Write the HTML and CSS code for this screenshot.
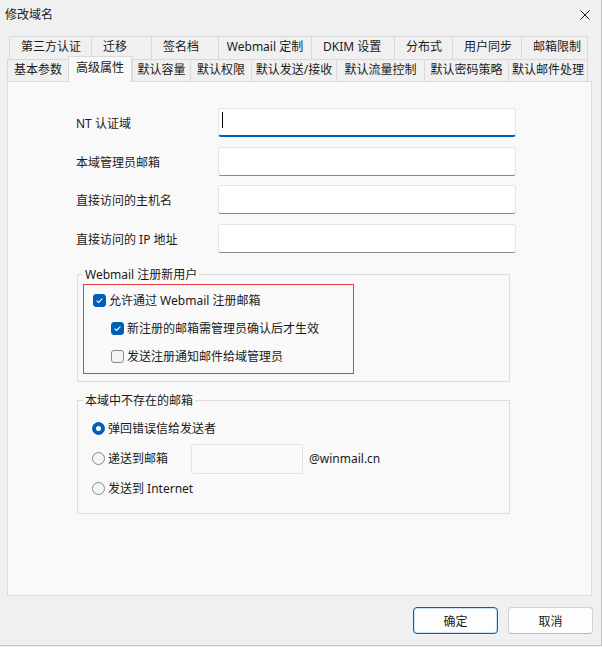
FILE: index.html
```html
<!doctype html>
<html lang="zh-CN">
  <head>
    <meta charset="UTF-8" />
    <meta name="viewport" content="width=device-width, initial-scale=1.0" />
    <title>修改域名</title>
    <link rel="stylesheet" href="styles.css">
  </head>
  <body>
    <div class="dialog">
      <div class="titlebar">
        <span class="title">修改域名</span>
        <button class="close" aria-label="关闭">
          <svg width="10" height="10" viewBox="0 0 10 10">
            <path d="M0.5 0.5 L9.5 9.5 M9.5 0.5 L0.5 9.5" stroke="#1a1a1a" stroke-width="1" fill="none" />
          </svg>
        </button>
      </div>

      <!-- 两排选项卡，前排紧贴内容面板 -->
      <div class="tabs">
        <div class="tab-row back">
          <div class="tab">第三方认证</div>
          <div class="tab">迁移</div>
          <div class="tab">签名档</div>
          <div class="tab wide">Webmail 定制</div>
          <div class="tab">DKIM 设置</div>
          <div class="tab">分布式</div>
          <div class="tab">用户同步</div>
          <div class="tab">邮箱限制</div>
        </div>
        <div class="tab-row front">
          <div class="tab">基本参数</div>
          <div class="tab active">高级属性</div>
          <div class="tab">默认容量</div>
          <div class="tab">默认权限</div>
          <div class="tab">默认发送/接收</div>
          <div class="tab">默认流量控制</div>
          <div class="tab">默认密码策略</div>
          <div class="tab">默认邮件处理</div>
        </div>
      </div>

      <div class="panel">
        <div class="fields">
          <label class="field-label">NT 认证域</label>
          <div class="input focused"><span class="caret"></span></div>
          <label class="field-label">本域管理员邮箱</label>
          <div class="input"></div>
          <label class="field-label">直接访问的主机名</label>
          <div class="input"></div>
          <label class="field-label">直接访问的 IP 地址</label>
          <div class="input"></div>
        </div>

        <fieldset class="group group-webmail">
          <legend>Webmail 注册新用户</legend>
          <div class="highlight">
            <div class="option">
              <span class="check on">
                <svg width="13" height="13" viewBox="0 0 13 13"><path d="M3.6 6.7 L5.5 8.5 L9.4 4.6" stroke="#fff" stroke-width="1.1" fill="none" /></svg>
              </span>
              允许通过 Webmail 注册邮箱
            </div>
            <div class="option sub">
              <span class="check on">
                <svg width="13" height="13" viewBox="0 0 13 13"><path d="M3.6 6.7 L5.5 8.5 L9.4 4.6" stroke="#fff" stroke-width="1.1" fill="none" /></svg>
              </span>
              新注册的邮箱需管理员确认后才生效
            </div>
            <div class="option sub">
              <span class="check"></span>
              发送注册通知邮件给域管理员
            </div>
          </div>
        </fieldset>

        <fieldset class="group group-missing">
          <legend>本域中不存在的邮箱</legend>
          <div class="option radio-row">
            <span class="radio on"></span>
            弹回错误信给发送者
          </div>
          <div class="option radio-row">
            <span class="radio-label"><span class="radio"></span>递送到邮箱</span>
            <div class="input mailbox"></div>
            <span class="domain">@winmail.cn</span>
          </div>
          <div class="option radio-row">
            <span class="radio"></span>
            发送到 Internet
          </div>
        </fieldset>
      </div>

      <div class="buttons">
        <button class="btn primary">确定</button>
        <button class="btn">取消</button>
      </div>
    </div>
  </body>
</html>
```

FILE: styles.css
```css
* {
  box-sizing: border-box;
}
body {
  margin: 0;
  background: #f0f0f0;
  color: #1a1a1a;
  font-family: "Noto Sans", "Noto Sans CJK SC", sans-serif;
  font-size: 12px;
  overflow: hidden;
}
.dialog {
  width: 602px;
  height: 646px;
  border-right: 1px solid #bfbfbf;
  border-bottom: 1px solid #c4c4c4;
}
.titlebar {
  height: 30px;
  display: flex;
  align-items: center;
  justify-content: space-between;
  padding: 0 11px 0 5px;
}
.title {
  line-height: 16px;
}
.close {
  border: none;
  background: none;
  padding: 0;
  width: 10px;
  height: 10px;
  display: flex;
}

/* tabs */
.tabs {
  padding-top: 6px;
}
.tab-row {
  display: flex;
  align-items: flex-start;
}
.tab-row.back {
  height: 23px;
  margin-left: 9px;
}
.tab-row.front {
  height: 22px;
  margin-left: 7px;
}
.tab {
  border-top: 1px solid #dadada;
  border-left: 1px solid #dadada;
  white-space: nowrap;
  background: #f0f0f0;
}
.tab:last-child {
  border-right: 1px solid #dadada;
}
.back .tab {
  height: 23px;
  line-height: 20px;
  padding-left: 11px;
}
.back .tab.wide {
  padding-left: 0;
  text-align: center;
}
.front .tab {
  height: 22px;
  line-height: 19px;
  text-align: center;
}
.front .tab.active {
  position: relative;
  z-index: 1;
  margin-top: -3px;
  height: 26px;
  line-height: 22px;
  background: #f9f9f9;
  border-right: 1px solid #dadada;
}
.back .tab:nth-child(1) { width: 82px; }
.back .tab:nth-child(2) { width: 60px; }
.back .tab:nth-child(3) { width: 67px; }
.back .tab:nth-child(4) { width: 93px; }
.back .tab:nth-child(5) { width: 83px; }
.back .tab:nth-child(6) { width: 58px; }
.back .tab:nth-child(7) { width: 69px; }
.back .tab:nth-child(8) { width: 67px; }
.front .tab:nth-child(1) { width: 61px; }
.front .tab:nth-child(2) { width: 64px; }
.front .tab:nth-child(3) { width: 58px; }
.front .tab:nth-child(4) { width: 61px; }
.front .tab:nth-child(5) { width: 85px; }
.front .tab:nth-child(6) { width: 88px; }
.front .tab:nth-child(7) { width: 84px; }
.front .tab:nth-child(8) { width: 80px; }

/* page body */
.panel {
  margin-left: 7px;
  width: 585px;
  height: 515px;
  border: 1px solid #dcdcdc;
  background: #f9f9f9;
}
.fields {
  display: grid;
  grid-template-columns: 142px 298px;
  grid-auto-rows: 29px;
  row-gap: 9.5px;
  padding: 26px 0 0 68px;
}
.field-label {
  align-self: center;
  padding-top: 3px;
  line-height: 16px;
}
.input {
  position: relative;
  background: #fff;
  border: 1px solid #e5e5e5;
  border-bottom-color: #8a8a8a;
  border-radius: 3px;
}
.input.focused {
  border-bottom: 2px solid #005fb8;
}
.caret {
  position: absolute;
  left: 3px;
  top: 3px;
  width: 1px;
  height: 16px;
  background: #000;
}

.group {
  margin: 0 0 0 69px;
  width: 433px;
  border: 1px solid #dcdcdc;
  padding: 1px 0 7px 5px;
}
.group legend {
  padding: 0 2px;
  line-height: 16px;
}
.group-webmail {
  margin-top: 14px;
}
.group-missing {
  margin-top: 11px;
  padding: 5px 0 9px 5px;
}
.highlight {
  width: 271px;
  border: 1px solid #e53e3e;
  padding: 2px 0 2px 9px;
}
.option {
  display: flex;
  align-items: center;
  height: 28px;
  line-height: 16px;
}
.option.sub {
  padding-left: 18px;
}
.check,
.radio {
  flex: none;
  width: 13px;
  height: 13px;
  margin-right: 3px;
  border: 1px solid #8a8a8a;
  background: #f5f5f5;
}
.check {
  border-radius: 3px;
  position: relative;
}
.check svg {
  position: absolute;
  left: -1px;
  top: -1px;
}
.check.on,
.radio.on {
  border-color: #005fb8;
  background: #005fb8;
}
.radio {
  border-radius: 50%;
}
.radio.on {
  display: flex;
  align-items: center;
  justify-content: center;
}
.radio.on::after {
  content: "";
  width: 5px;
  height: 5px;
  border-radius: 50%;
  background: #fff;
}
.radio-row {
  height: 30px;
  padding-left: 9px;
}
.radio-label {
  display: flex;
  align-items: center;
  width: 99px;
}
.input.mailbox {
  width: 112px;
  height: 30px;
  background: transparent;
  border-color: #e3e3e3;
}
.domain {
  margin-left: 6px;
}

.buttons {
  display: flex;
  justify-content: flex-end;
  gap: 10px;
  padding: 11px 8px 0 0;
}
.btn {
  width: 85px;
  height: 27px;
  font: inherit;
  color: #1a1a1a;
  background: #fdfdfd;
  border: 1px solid #d2d2d2;
  border-bottom-color: #b9b9b9;
  border-radius: 4px;
}
.btn.primary {
  border: 1px solid #0063b1;
  box-shadow: inset 0 0 0 1px #cfe2f3;
}
```
